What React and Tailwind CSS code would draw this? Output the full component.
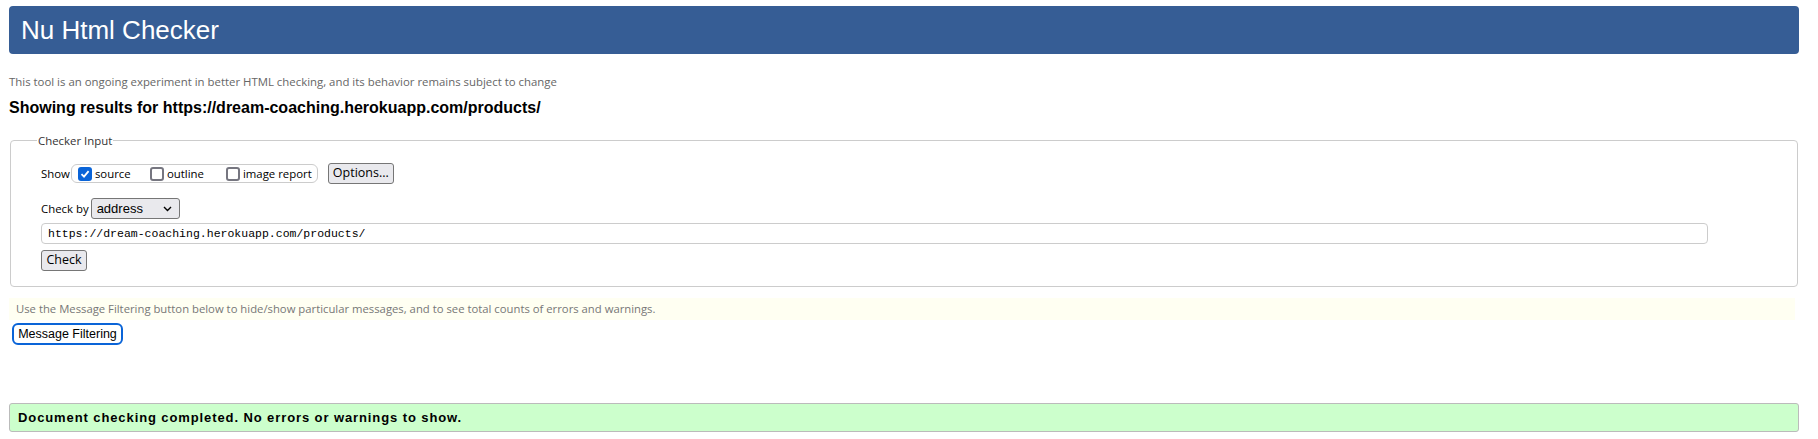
import React from 'react';

function Checkbox({ checked }) {
  return checked ? (
    <span className="inline-flex h-[14px] w-[14px] shrink-0 items-center justify-center rounded-[3px] bg-[#0a64d8]">
      <svg width="10" height="10" viewBox="0 0 10 10">
        <path d="M1.5 5.2 L4 7.6 L8.6 2.2" fill="none" stroke="white" strokeWidth="1.8" />
      </svg>
    </span>
  ) : (
    <span className="inline-block h-[14px] w-[14px] shrink-0 rounded-[3px] border-2 border-[#767680] bg-white" />
  );
}

export default function App() {
  const sans = { fontFamily: '"Liberation Sans", Arial, sans-serif' };
  const ui = { fontFamily: '"Open Sans", "Noto Sans", sans-serif' };

  return (
    <div className="min-h-[439px] bg-white px-[9px] pt-[6px] text-black" style={sans}>
      <div className="flex h-[48px] w-[1790px] items-center rounded-[4px] bg-[#365d95] pl-[12px]">
        <h1 className="text-[26px] text-white">Nu Html Checker</h1>
      </div>

      <p className="mt-[19px] text-[11.4px] text-[#666]" style={ui}>
        This tool is an ongoing experiment in better HTML checking, and its behavior remains subject to change
      </p>
      <h2 className="mt-[6px] text-[16px] font-bold">
        Showing results for https://dream-coaching.herokuapp.com/products/
      </h2>

      <fieldset className="ml-px mt-[12px] h-[155px] w-[1788px] rounded-[4px] border border-[#ccc] px-[30px] pb-[10px]" style={ui}>
        <legend className="ml-[-4px] px-[1px] text-[11.4px] text-[#333]">Checker Input</legend>
        <div className="mt-[14px] flex items-center text-[11.4px]">
          <span className="mr-[1px]">Show</span>
          <div className="flex h-[19px] items-center rounded-[6px] border border-[#ccc] pl-[6px] pr-[5px]">
            <Checkbox checked />
            <span className="ml-[3px] w-[55px]">source</span>
            <Checkbox />
            <span className="ml-[3px] w-[59px]">outline</span>
            <Checkbox />
            <span className="ml-[3px] whitespace-nowrap">image report</span>
          </div>
          <button className="ml-[10px] h-[21px] w-[66px] rounded-[3px] border border-[#767676] bg-[#e9e9ed] text-[12.5px]">
            Options...
          </button>
        </div>
        <div className="mt-[14px] flex items-center text-[11.4px]">
          <span className="whitespace-nowrap">Check by</span>
          <div className="ml-[2px] flex h-[21px] w-[89px] items-center justify-between rounded-[3px] border border-[#767676] bg-[#e9e9ed] pl-[5px] pr-[7px] text-[13px]" style={sans}>
            <span>address</span>
            <svg width="9" height="6" viewBox="0 0 9 6">
              <path d="M1 1 L4.5 4.5 L8 1" fill="none" stroke="black" strokeWidth="1.4" />
            </svg>
          </div>
        </div>
        <div className="mt-[4px] flex h-[21px] w-[1667px] items-center rounded-[4px] border border-[#ccc] pl-[6px] text-[11.5px]" style={{ fontFamily: '"Liberation Mono", monospace' }}>
          https://dream-coaching.herokuapp.com/products/
        </div>
        <button className="mt-[6px] h-[21px] w-[46px] rounded-[3px] border border-[#767676] bg-[#e9e9ed] text-[12.5px]">
          Check
        </button>
      </fieldset>

      <div className="mt-[11px] flex h-[22px] w-[1786px] items-center bg-[#fffff2] pl-[7px] text-[11.3px] text-[#777]" style={ui}>
        Use the Message Filtering button below to hide/show particular messages, and to see total counts of errors and warnings.
      </div>
      <button className="ml-[3px] mt-[3px] flex h-[22px] w-[111px] items-center justify-center whitespace-nowrap rounded-[6px] border-2 border-[#0a64d8] bg-white text-[12.5px]">
        Message Filtering
      </button>

      <div className="mt-[58px] flex h-[29px] w-[1790px] items-center rounded-[3px] border border-[#bbb] bg-[#ccffcc] pl-[8px] text-[13px] font-bold tracking-[0.9px]">
        Document checking completed. No errors or warnings to show.
      </div>
    </div>
  );
}
